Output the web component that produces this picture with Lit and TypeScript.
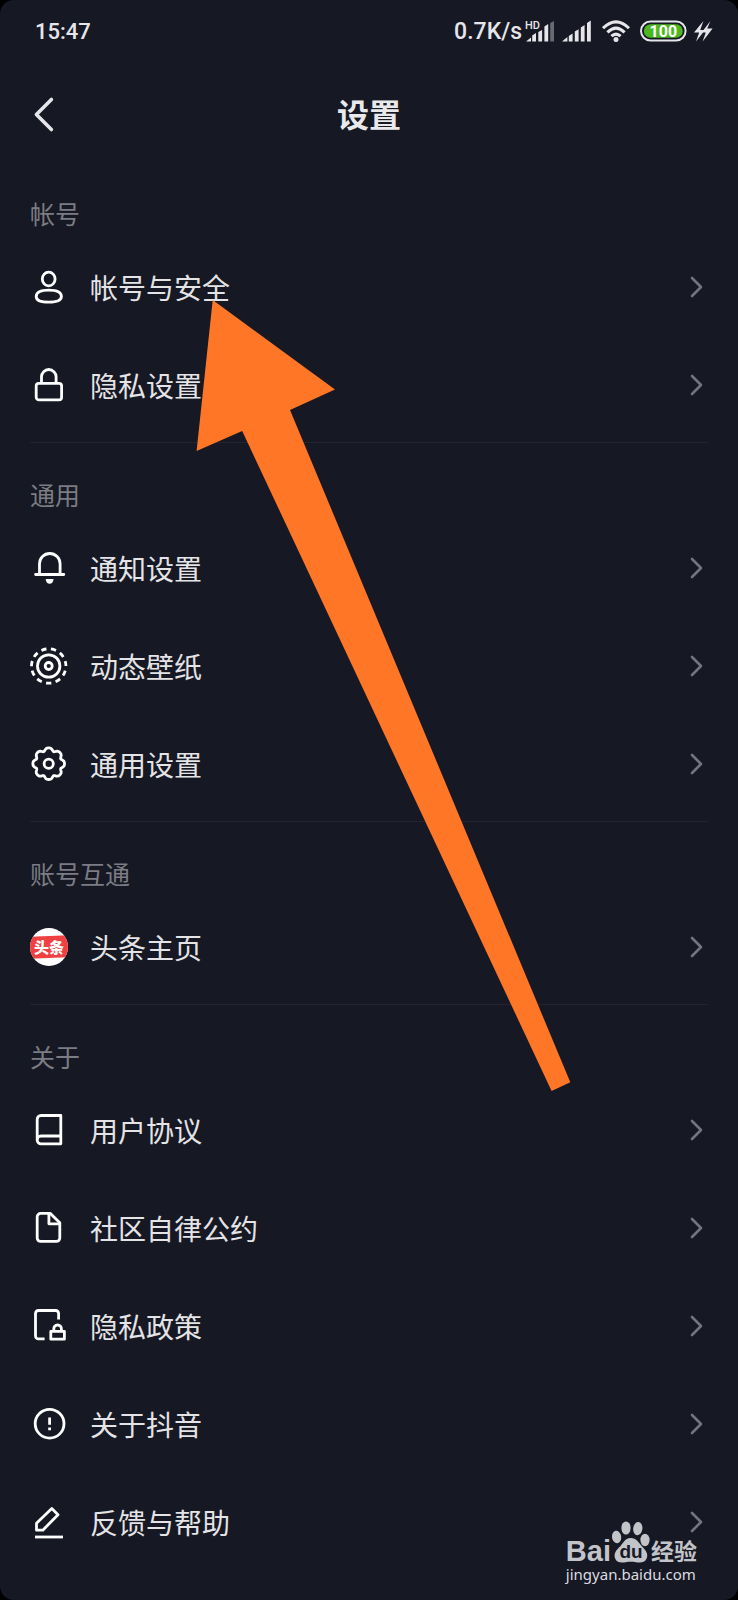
import { LitElement, html, css, svg, nothing } from "lit";
import type { SVGTemplateResult } from "lit";
import { customElement, property } from "lit/decorators.js";

type IconName =
  | "user" | "lock" | "bell" | "wallpaper" | "gear" | "toutiao"
  | "book" | "doc" | "policy" | "about" | "feedback";

interface Item { icon: IconName; label: string; }
interface Group { title: string; items: Item[]; }

const GROUPS: Group[] = [
  {
    title: "帐号",
    items: [
      { icon: "user", label: "帐号与安全" },
      { icon: "lock", label: "隐私设置" },
    ],
  },
  {
    title: "通用",
    items: [
      { icon: "bell", label: "通知设置" },
      { icon: "wallpaper", label: "动态壁纸" },
      { icon: "gear", label: "通用设置" },
    ],
  },
  {
    title: "账号互通",
    items: [{ icon: "toutiao", label: "头条主页" }],
  },
  {
    title: "关于",
    items: [
      { icon: "book", label: "用户协议" },
      { icon: "doc", label: "社区自律公约" },
      { icon: "policy", label: "隐私政策" },
      { icon: "about", label: "关于抖音" },
      { icon: "feedback", label: "反馈与帮助" },
    ],
  },
];

// Eight-lobed outline of the gear, sampled around its centre.
function gearPath(cx: number, cy: number): string {
  const steps = 160;
  const points: string[] = [];
  for (let i = 0; i < steps; i++) {
    const a = (i / steps) * Math.PI * 2;
    const r = 14.7 + 1.4 * Math.cos(8 * a) - 0.3 * Math.cos(16 * a);
    points.push(`${(cx + r * Math.sin(a)).toFixed(2)} ${(cy - r * Math.cos(a)).toFixed(2)}`);
  }
  return `M${points.join("L")}Z`;
}

const ICONS: Record<IconName, SVGTemplateResult> = {
  user: svg`
    <ellipse cx="18.7" cy="11" rx="6.4" ry="6.9" />
    <path d="M18.8 22.2C27 22.2 31.4 24 31.4 28.6C31.4 32.8 27 34.2 18.8 34.2S6.2 32.8 6.2 28.6C6.2 24 10.6 22.2 18.8 22.2Z" />`,
  lock: svg`
    <rect x="6.2" y="17.4" width="25.4" height="16.4" rx="2.6" />
    <path d="M11.5 17.4V10.8a7.3 7.3 0 0 1 14.6 0V17.4" />`,
  bell: svg`
    <path stroke-linecap="round" d="M5.6 25.5H33.8M9.5 25.5V14.8a10.3 10.3 0 0 1 20.6 0V25.5" />
    <path class="solid" d="M15.7 30H23.5C23.5 33 21.8 34.7 19.6 34.7S15.7 33 15.7 30Z" />`,
  wallpaper: svg`
    <circle cx="18.7" cy="19" r="11.2" />
    <circle cx="18.7" cy="19" r="3.5" />
    <circle cx="18.7" cy="19" r="17.2" pathLength="110" stroke-dasharray="5.4 4.6"
      transform="rotate(81.2 18.7 19)" />`,
  gear: svg`
    <path d=${gearPath(18.7, 18.7)} />
    <circle cx="18.7" cy="18.7" r="4.6" />`,
  toutiao: svg`
    <clipPath id="disc"><circle cx="19" cy="19" r="19" /></clipPath>
    <g clip-path="url(#disc)" stroke="none">
      <rect width="38" height="38" fill="#fff" />
      <rect x="-2" y="8" width="42" height="22" fill="#f04142" transform="rotate(-2 19 19)" />
      <text class="brand" x="19" y="25" text-anchor="middle">头条</text>
    </g>`,
  book: svg`
    <path d="M30.8 4.5H11a3.8 3.8 0 0 0-3.8 3.8V29a3.8 3.8 0 0 0 3.8 3.8H30.8Z" />
    <path d="M7.2 28.8a3.8 3.8 0 0 1 3.8-3.8H30.8" />`,
  doc: svg`
    <path d="M20.4 4.4H10.6a3.4 3.4 0 0 0-3.4 3.4V29a3.4 3.4 0 0 0 3.4 3.4H26.4A3.4 3.4 0 0 0 29.8 29V13.8Z" />
    <path d="M18.9 4.8V14.8H29.4" />`,
  policy: svg`
    <path d="M28.6 12.4V6.4a2.9 2.9 0 0 0-2.9-2.9H8.4A2.9 2.9 0 0 0 5.5 6.4V29a2.9 2.9 0 0 0 2.9 2.9H14.6" />
    <rect x="20.8" y="24.4" width="13.6" height="7.8" />
    <path d="M23.8 24V21.8a3.8 3.8 0 0 1 7.6 0V24" />`,
  about: svg`
    <circle cx="19.6" cy="18.7" r="14.4" />
    <path d="M19.6 12.4V19.8M19.6 22.5V25.3" />`,
  feedback: svg`
    <path d="M6.5 27.2V20.2L21.8 5.6L28 11.7L12.8 27.2Z" />
    <path d="M5 34H33" />`,
};

const FONT = css`"Noto Sans CJK SC", sans-serif`;

@customElement("status-bar")
class StatusBar extends LitElement {
  static styles = css`
    :host {
      display: flex;
      justify-content: space-between;
      align-items: center;
      box-sizing: border-box;
      height: 68px;
      padding: 2px 25px 6px 35px;
      color: #e6e6ea;
      font: 500 23px/30px Roboto, sans-serif;
    }
    .time { font-size: 22px; }
    .tray { display: flex; align-items: center; gap: 6px; }
    .speed { margin-right: -4px; }
    svg { display: block; fill: currentColor; }
    .hd { font: 500 11px Roboto, sans-serif; }
    .level { font: 700 16px Roboto, sans-serif; fill: #fff; }
    .dim { opacity: 0.4; }
    .ring { fill: none; stroke: currentColor; stroke-width: 2; }
    .charge { fill: #4db81e; }
    .arc { fill: none; stroke: currentColor; stroke-width: 3; }
  `;

  render() {
    return html`
      <time class="time">15:47</time>
      <div class="tray">
        <span class="speed">0.7K/s</span>
        <svg width="32" height="28" viewBox="-2 -1 32 28" role="img" aria-label="HD">
          <text class="hd" x="-1" y="10">HD</text>
          <path d="M0 22.5L5 18.4V22.5ZM6.2 16.5l3.8-2.6V22.5H6.2ZM12.3 13l3.8-2V22.5h-3.8ZM18.4 7.5l3.8-2.4V22.5h-3.8Z" />
          <path class="dim" d="M24.2 4l3.8-2V22.5h-3.8Z" />
        </svg>
        <svg width="34" height="24" viewBox="0 1 34 24" aria-hidden="true">
          <path d="M0 22.5L5.4 18V22.5ZM6.8 17l3.8-2.4V22.5H6.8ZM12.8 12.6l3.8-2.4V22.5h-3.8ZM18.8 8.4l3.8-2.4V22.5h-3.8ZM25 4l3.8-2.4V22.5H25Z" />
        </svg>
        <svg width="32" height="24" viewBox="0 1 32 24" aria-hidden="true">
          <path class="arc" d="M1 9.2Q14 -3.6 27 9.2M5.4 13.4Q14 5 22.6 13.4M9.4 17.2Q14 13 18.6 17.2" />
          <circle cx="14" cy="20.4" r="2.5" />
        </svg>
        <svg width="47" height="24" viewBox="0 1 47 24" role="img" aria-label="100%">
          <rect class="ring" x="1" y="2.5" width="44.6" height="19" rx="9.5" />
          <rect class="charge" x="3.8" y="5.2" width="39" height="13.6" rx="6.8" />
          <text class="level" x="23.3" y="17.8" text-anchor="middle">100</text>
        </svg>
        <svg width="20" height="24" viewBox="0 1 20 24" aria-hidden="true">
          <path d="M10.4 2L1 13.4H6.2L3 22.5L12 11H7.2ZM17.4 2L8.6 13.4H12.8L9.6 22.5L19.6 9.6H14.2Z" />
        </svg>
      </div>
    `;
  }
}

@customElement("setting-row")
class SettingRow extends LitElement {
  @property() icon: IconName = "user";
  @property() label = "";

  static styles = css`
    :host { display: block; }
    .row {
      display: flex;
      align-items: center;
      gap: 22px;
      height: 98px;
      color: #e4e4e7;
      text-decoration: none;
      font: 400 28px/40px ${FONT};
    }
    .label { flex: 1; }
    .icon {
      flex: none;
      fill: none;
      stroke: #fff;
      stroke-width: 2.8;
      stroke-linejoin: round;
    }
    .solid { fill: #fff; stroke: none; }
    .brand { fill: #fff; font: 900 15px ${FONT}; }
    .chevron {
      flex: none;
      fill: none;
      stroke: #73747d;
      stroke-width: 2.6;
      stroke-linecap: round;
      stroke-linejoin: round;
    }
  `;

  render() {
    return html`
      <a class="row" href="#">
        <svg class="icon" width="38" height="38" viewBox="0 0 38 38" aria-hidden="true">
          ${ICONS[this.icon] ?? nothing}
        </svg>
        <span class="label">${this.label}</span>
        <svg class="chevron" width="18" height="22" viewBox="0 0 18 22" aria-hidden="true">
          <path d="M2 2L11 11L2 20" />
        </svg>
      </a>
    `;
  }
}

@customElement("site-mark")
class SiteMark extends LitElement {
  static styles = css`
    :host { display: block; color: #c3c4c9; }
    .brand { display: flex; align-items: flex-end; }
    .latin { font: 700 29px/26px "Liberation Sans", sans-serif; }
    .han { font: 700 23px/28px ${FONT}; }
    .paw { display: block; fill: currentColor; }
    .du { font: 700 19px "Liberation Sans", sans-serif; fill: #171923; }
    .url { font: 400 15px/20px "Noto Sans", sans-serif; color: #dcdce0; }
  `;

  render() {
    return html`
      <div class="brand">
        <span class="latin">Bai</span>
        <svg class="paw" width="40" height="44" viewBox="0 0 40 44">
          <ellipse cx="5.6" cy="17" rx="4.6" ry="6.2" transform="rotate(-8 5.6 17)" />
          <ellipse cx="15" cy="8" rx="4.6" ry="6.6" />
          <ellipse cx="26.8" cy="8.6" rx="4.6" ry="6.6" transform="rotate(8 26.8 8.6)" />
          <ellipse cx="34" cy="20" rx="4.6" ry="6.2" />
          <path d="M19.6 18C25.5 18 28 23 31.6 27C36 31.6 37.4 35 35.4 39C33.4 43 29 42.8 25 42.2C21.5 41.6 18 41.6 14.6 42.2C10 43 6 42.6 4.4 39C2.6 35 4 31.4 8 27.6C12 24 13.6 18 19.6 18Z" />
          <text class="du" x="20" y="38" text-anchor="middle">du</text>
        </svg>
        <span class="han">经验</span>
      </div>
      <div class="url">jingyan.baidu.com</div>
    `;
  }
}

@customElement("app-root")
class AppRoot extends LitElement {
  static styles = css`
    :host { display: block; background: #000; }
    .screen {
      position: relative;
      box-sizing: border-box;
      min-height: 100vh;
      overflow: hidden;
      border-radius: 14px;
      background: #161823;
      font-family: ${FONT};
    }
    .bar {
      display: grid;
      grid-template-columns: 1fr auto 1fr;
      align-items: center;
      height: 94px;
      padding: 0 30px;
    }
    .back { justify-self: start; display: block; }
    .back svg {
      display: block;
      fill: none;
      stroke: #e6e6ea;
      stroke-width: 3.6;
      stroke-linecap: round;
      stroke-linejoin: round;
    }
    .title { margin: 0; padding-bottom: 4px; color: #e9e9ec; font: 700 32px/46px ${FONT}; }
    .groups { padding: 0 30px; }
    .group { padding: 34px 0 8px; }
    .group + .group { border-top: 1px solid #22242e; }
    .caption {
      margin: 0 0 8px;
      color: #7b7c84;
      font: 400 25px/34px ${FONT};
    }
    .list { margin: 0; padding: 0; list-style: none; }
    .pointer {
      position: absolute;
      left: 196px;
      top: 300px;
      fill: #ff7626;
      pointer-events: none;
    }
    .mark { position: absolute; right: 41px; bottom: 16px; }
  `;

  render() {
    return html`
      <div class="screen">
        <status-bar></status-bar>
        <header class="bar">
          <a class="back" href="#" aria-label="返回">
            <svg width="28" height="40" viewBox="0 0 28 40"><path d="M21.4 4.5L6.4 19.5L21.4 34.5" /></svg>
          </a>
          <h1 class="title">设置</h1>
        </header>
        <main class="groups">
          ${GROUPS.map((group) => html`
            <section class="group">
              <h2 class="caption">${group.title}</h2>
              <ul class="list">
                ${group.items.map((item) => html`
                  <li><setting-row .icon=${item.icon} .label=${item.label}></setting-row></li>
                `)}
              </ul>
            </section>
          `)}
        </main>
        <svg class="pointer" width="376" height="792" viewBox="0 0 376 792" aria-hidden="true">
          <path d="M16.7 0L139 89.5L94 110L374.3 782.3L355.6 791L46.2 131L0.6 151Z" />
        </svg>
        <site-mark class="mark"></site-mark>
      </div>
    `;
  }
}
